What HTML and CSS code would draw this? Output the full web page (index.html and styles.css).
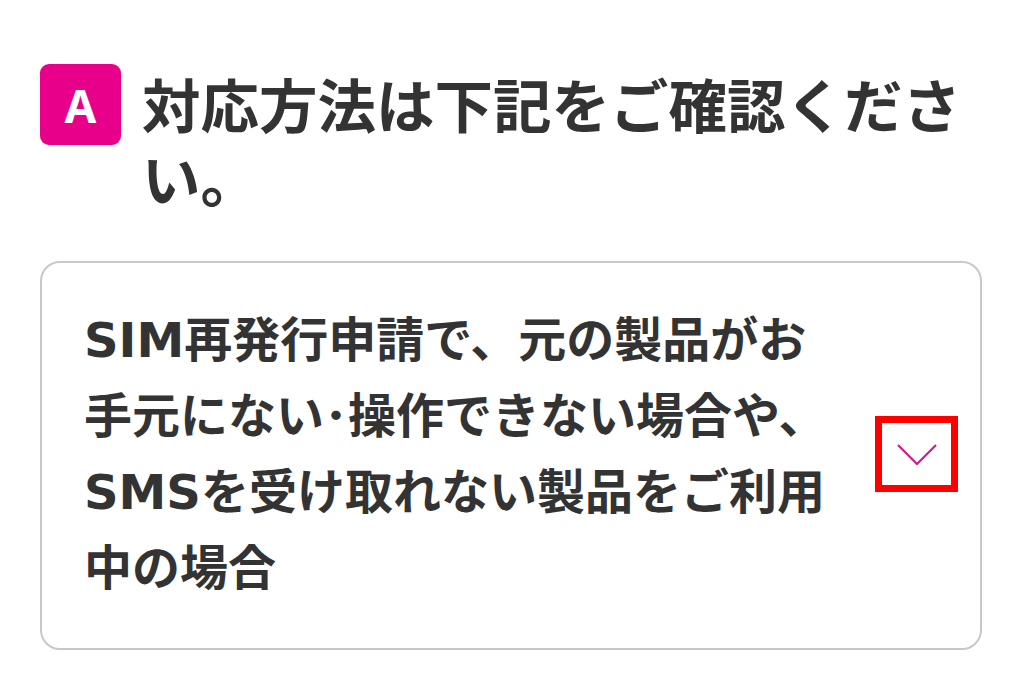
FILE: index.html
```html
<!DOCTYPE html>
<html lang="ja">
<head>
    <meta charset="UTF-8">
    <meta name="viewport" content="width=device-width, initial-scale=1.0">
    <title>よくあるご質問</title>
    <link rel="stylesheet" href="styles.css">
</head>
<body>
    <div class="answer">
        <div class="answer-head">
            <span class="badge">A</span>
            <h2 class="answer-title">対応方法は下記をご確認ください。</h2>
        </div>

        <div class="accordion">
            <p class="accordion-label">SIM再発行申請で、元の製品がお手元にない･操作できない場合や、SMSを受け取れない製品をご利用中の場合</p>
            <span class="toggle">
                <svg width="44" height="26" viewBox="0 0 44 26">
                    <polyline points="3,4 22,23 41,4" fill="none" stroke="#d4198c" stroke-width="2.2"/>
                </svg>
            </span>
        </div>
    </div>
</body>
</html>
```

FILE: styles.css
```css
body {
    margin: 0;
    background-color: #fff;
    color: #333;
    font-family: "Noto Sans CJK JP", "Noto Sans", sans-serif;
}
.answer {
    padding: 64px 42px 0 40px;
}
.answer-head {
    display: flex;
    align-items: flex-start;
    gap: 21px;
}
.badge {
    flex: none;
    display: flex;
    align-items: center;
    justify-content: center;
    width: 81px;
    height: 81px;
    border-radius: 9px;
    background-color: #e8008a;
    color: #fff;
    font-family: "Noto Sans", sans-serif;
    font-weight: bold;
    font-size: 46px;
}
.answer-title {
    margin: 0;
    margin-top: 2px;
    font-size: 58.5px;
    line-height: 74px;
    font-weight: bold;
}
.accordion {
    display: flex;
    align-items: center;
    margin-top: 47px;
    padding: 39px 22px 42px 42px;
    border: 2px solid #c8c8c8;
    border-radius: 20px;
}
/* latin letters are set wider than the CJK font's own */
.accordion-label {
    margin: 0;
    flex: 0 1 758px;
    font-family: "DejaVu Sans", "Noto Sans CJK JP", sans-serif;
    font-size: 48px;
    line-height: 76px;
    font-weight: bold;
}
.toggle {
    flex: none;
    display: flex;
    align-items: center;
    justify-content: center;
    margin-left: auto;
    width: 69px;
    height: 62px;
    border: 7px solid #ff0000;
}
```
